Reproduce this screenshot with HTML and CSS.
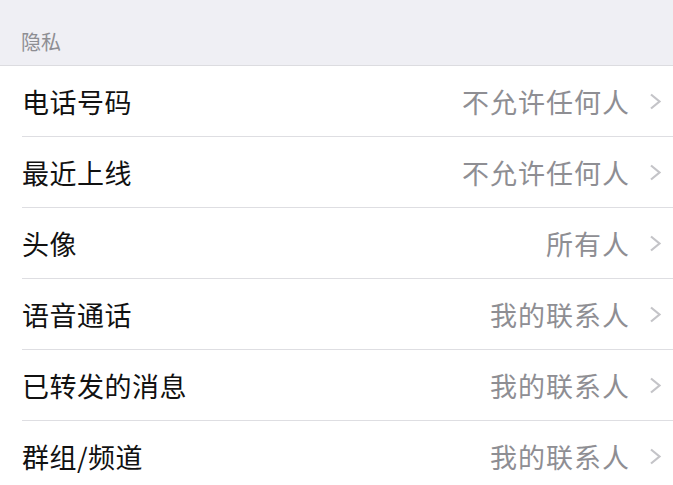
FILE: index.html
```html
<!DOCTYPE html>
<html lang="zh-CN">
<head>
    <meta charset="UTF-8">
    <meta name="viewport" content="width=device-width, initial-scale=1.0">
    <title>隐私</title>
    <link rel="stylesheet" href="styles.css">
</head>
<body>
    <div class="section-header">隐私</div>
    <ul class="list">
        <li class="row">
            <span class="label">电话号码</span>
            <span class="value">不允许任何人</span>
            <svg class="chevron" viewBox="0 0 13 17"><path d="M2 1.5 L10.5 8.5 L2 15.5"/></svg>
        </li>
        <li class="row">
            <span class="label">最近上线</span>
            <span class="value">不允许任何人</span>
            <svg class="chevron" viewBox="0 0 13 17"><path d="M2 1.5 L10.5 8.5 L2 15.5"/></svg>
        </li>
        <li class="row">
            <span class="label">头像</span>
            <span class="value">所有人</span>
            <svg class="chevron" viewBox="0 0 13 17"><path d="M2 1.5 L10.5 8.5 L2 15.5"/></svg>
        </li>
        <li class="row">
            <span class="label">语音通话</span>
            <span class="value">我的联系人</span>
            <svg class="chevron" viewBox="0 0 13 17"><path d="M2 1.5 L10.5 8.5 L2 15.5"/></svg>
        </li>
        <li class="row">
            <span class="label">已转发的消息</span>
            <span class="value">我的联系人</span>
            <svg class="chevron" viewBox="0 0 13 17"><path d="M2 1.5 L10.5 8.5 L2 15.5"/></svg>
        </li>
        <li class="row">
            <span class="label">群组/频道</span>
            <span class="value">我的联系人</span>
            <svg class="chevron" viewBox="0 0 13 17"><path d="M2 1.5 L10.5 8.5 L2 15.5"/></svg>
        </li>
    </ul>
</body>
</html>
```

FILE: styles.css
```css
* {
    margin: 0;
    padding: 0;
    box-sizing: border-box;
    font-family: "Noto Sans CJK SC", "Noto Sans", sans-serif;
}

body {
    background: #efeff4;
    width: 673px;
    height: 485px;
    overflow: hidden;
}

.section-header {
    height: 66px;
    padding: 29px 0 0 21px;
    font-size: 20px;
    line-height: 26px;
    color: #8e8e93;
    border-bottom: 1px solid #dcdce0;
}

.list {
    list-style: none;
    background: white;
}

.row {
    display: flex;
    align-items: center;
    height: 71px;
    margin-left: 22px;
    padding-right: 11px;
    border-bottom: 1px solid #dedee2;
}

.label {
    flex: 1;
    font-size: 27px;
    letter-spacing: 0.5px;
    color: #111;
}

.value {
    font-size: 27px;
    letter-spacing: 1px;
    color: #8e8e93;
}

.chevron {
    width: 13px;
    height: 17px;
    margin-left: 19px;
    fill: none;
    stroke: #c4c4c8;
    stroke-width: 2.2;
}
```
